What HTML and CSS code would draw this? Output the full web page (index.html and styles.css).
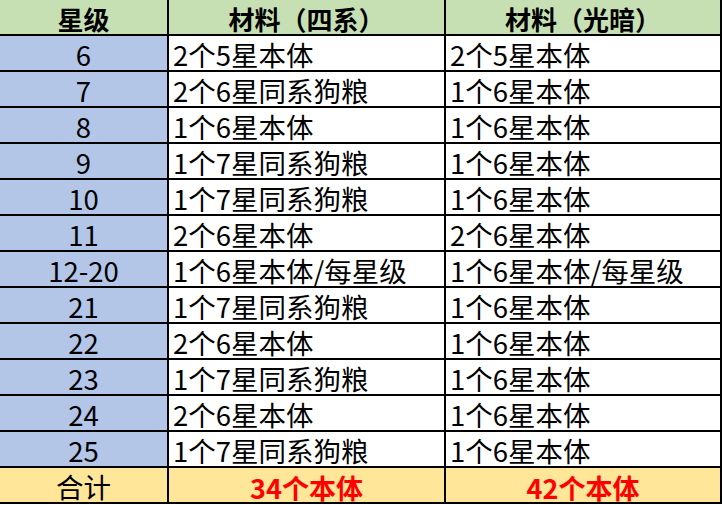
FILE: index.html
```html
<!DOCTYPE html>
<html lang="zh">
<head>
<meta charset="utf-8">
<link rel="stylesheet" href="styles.css">
</head>
<body>
<div class="sheet">
  <div class="c head lvl">星级</div>
  <div class="c head mid">材料（四系）</div>
  <div class="c head last">材料（光暗）</div>

  <div class="c lvl">6</div><div class="c mid">2个5星本体</div><div class="c last">2个5星本体</div>
  <div class="c lvl">7</div><div class="c mid">2个6星同系狗粮</div><div class="c last">1个6星本体</div>
  <div class="c lvl">8</div><div class="c mid">1个6星本体</div><div class="c last">1个6星本体</div>
  <div class="c lvl">9</div><div class="c mid">1个7星同系狗粮</div><div class="c last">1个6星本体</div>
  <div class="c lvl">10</div><div class="c mid">1个7星同系狗粮</div><div class="c last">1个6星本体</div>
  <div class="c lvl">11</div><div class="c mid">2个6星本体</div><div class="c last">2个6星本体</div>
  <div class="c lvl">12-20</div><div class="c mid">1个6星本体/每星级</div><div class="c last">1个6星本体/每星级</div>
  <div class="c lvl">21</div><div class="c mid">1个7星同系狗粮</div><div class="c last">1个6星本体</div>
  <div class="c lvl">22</div><div class="c mid">2个6星本体</div><div class="c last">1个6星本体</div>
  <div class="c lvl">23</div><div class="c mid">1个7星同系狗粮</div><div class="c last">1个6星本体</div>
  <div class="c lvl">24</div><div class="c mid">2个6星本体</div><div class="c last">1个6星本体</div>
  <div class="c lvl">25</div><div class="c mid">1个7星同系狗粮</div><div class="c last">1个6星本体</div>

  <div class="c total lvl">合计</div>
  <div class="c total mid sum">34个本体</div>
  <div class="c total last sum">42个本体</div>
</div>
</body>
</html>
```
FILE: styles.css
```css
html, body {
  margin: 0;
  padding: 0;
  background: #ffffff;
}
.sheet {
  display: grid;
  grid-template-columns: 169px 277px 276px;
  grid-auto-rows: 36px;
  width: 722px;
  font-family: "Noto Sans CJK SC", "Noto Sans", sans-serif;
  font-size: 27.5px;
  color: #000;
}
.c {
  box-sizing: border-box;
  border-right: 2px solid #000;
  border-bottom: 2px solid #000;
  display: flex;
  align-items: center;
  padding: 4px 0 0 4px;
  line-height: 1;
  white-space: nowrap;
  background: #ffffff;
}
.lvl {
  justify-content: center;
  padding-left: 0;
  background: #b4c6e7;
}
.head {
  background: #c6e0b4;
  font-weight: bold;
  font-size: 26px;
  justify-content: center;
  padding-left: 0;
}
.total {
  background: #ffe699;
  justify-content: center;
  padding-left: 0;
}
.sum {
  color: #ff0000;
  font-weight: bold;
  font-size: 27px;
}
```
